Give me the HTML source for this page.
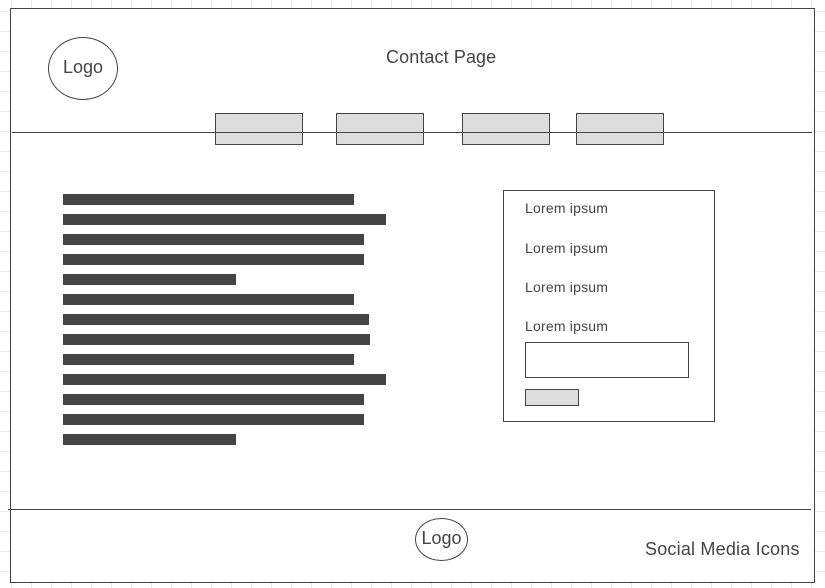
<!DOCTYPE html>
<html><head><meta charset="utf-8"><style>
html,body{margin:0;padding:0;width:825px;height:588px;overflow:hidden;background:#fff;
background-image:linear-gradient(#e9e9e9 1px,transparent 1px),linear-gradient(90deg,#e9e9e9 1px,transparent 1px);
background-size:20px 20px;background-position:11px 11px;font-family:"Liberation Sans",sans-serif;color:#444}
.a{position:absolute;box-sizing:border-box}
.bar{position:absolute;left:63px;height:11px;background:#444}
.btn{position:absolute;top:113px;width:88px;height:32px;background:#ddd;border:1px solid #444;box-sizing:border-box}
.t{position:absolute;font-size:14px;color:#444;white-space:nowrap;letter-spacing:0.2px}
</style></head><body>
<div class="a" style="left:10px;top:8px;width:805px;height:575px;border:1px solid #444;background:#fff"></div>
<div class="a" style="left:48px;top:37px;width:70px;height:63px;border:1px solid #444;border-radius:50%;text-align:center;line-height:59px;font-size:18px">Logo</div>
<div class="t" style="left:386px;top:47px;font-size:18px;letter-spacing:0.1px">Contact Page</div>
<div class="btn" style="left:215px"></div>
<div class="btn" style="left:336px"></div>
<div class="btn" style="left:462px"></div>
<div class="btn" style="left:576px"></div>
<div class="a" style="left:12px;top:132px;width:800px;height:1px;background:#444"></div>
<div class="bar" style="top:194px;width:291px"></div>
<div class="bar" style="top:214px;width:323px"></div>
<div class="bar" style="top:234px;width:301px"></div>
<div class="bar" style="top:254px;width:301px"></div>
<div class="bar" style="top:274px;width:173px"></div>
<div class="bar" style="top:294px;width:291px"></div>
<div class="bar" style="top:314px;width:306px"></div>
<div class="bar" style="top:334px;width:307px"></div>
<div class="bar" style="top:354px;width:291px"></div>
<div class="bar" style="top:374px;width:323px"></div>
<div class="bar" style="top:394px;width:301px"></div>
<div class="bar" style="top:414px;width:301px"></div>
<div class="bar" style="top:434px;width:173px"></div>
<div class="a" style="left:503px;top:190px;width:212px;height:232px;border:1px solid #444"></div>
<div class="t" style="left:525px;top:200px">Lorem ipsum</div>
<div class="t" style="left:525px;top:240px">Lorem ipsum</div>
<div class="t" style="left:525px;top:279px">Lorem ipsum</div>
<div class="t" style="left:525px;top:318px">Lorem ipsum</div>
<div class="a" style="left:525px;top:342px;width:164px;height:36px;border:1px solid #444"></div>
<div class="a" style="left:525px;top:389px;width:54px;height:17px;border:1px solid #444;background:#ddd"></div>
<div class="a" style="left:8px;top:509px;width:803px;height:1px;background:#444"></div>
<div class="a" style="left:415px;top:518px;width:53px;height:43px;border:1px solid #444;border-radius:50%;text-align:center;line-height:39px;font-size:18px">Logo</div>
<div class="t" style="left:645px;top:539px;font-size:18px;letter-spacing:0.2px">Social Media Icons</div>
</body></html>
